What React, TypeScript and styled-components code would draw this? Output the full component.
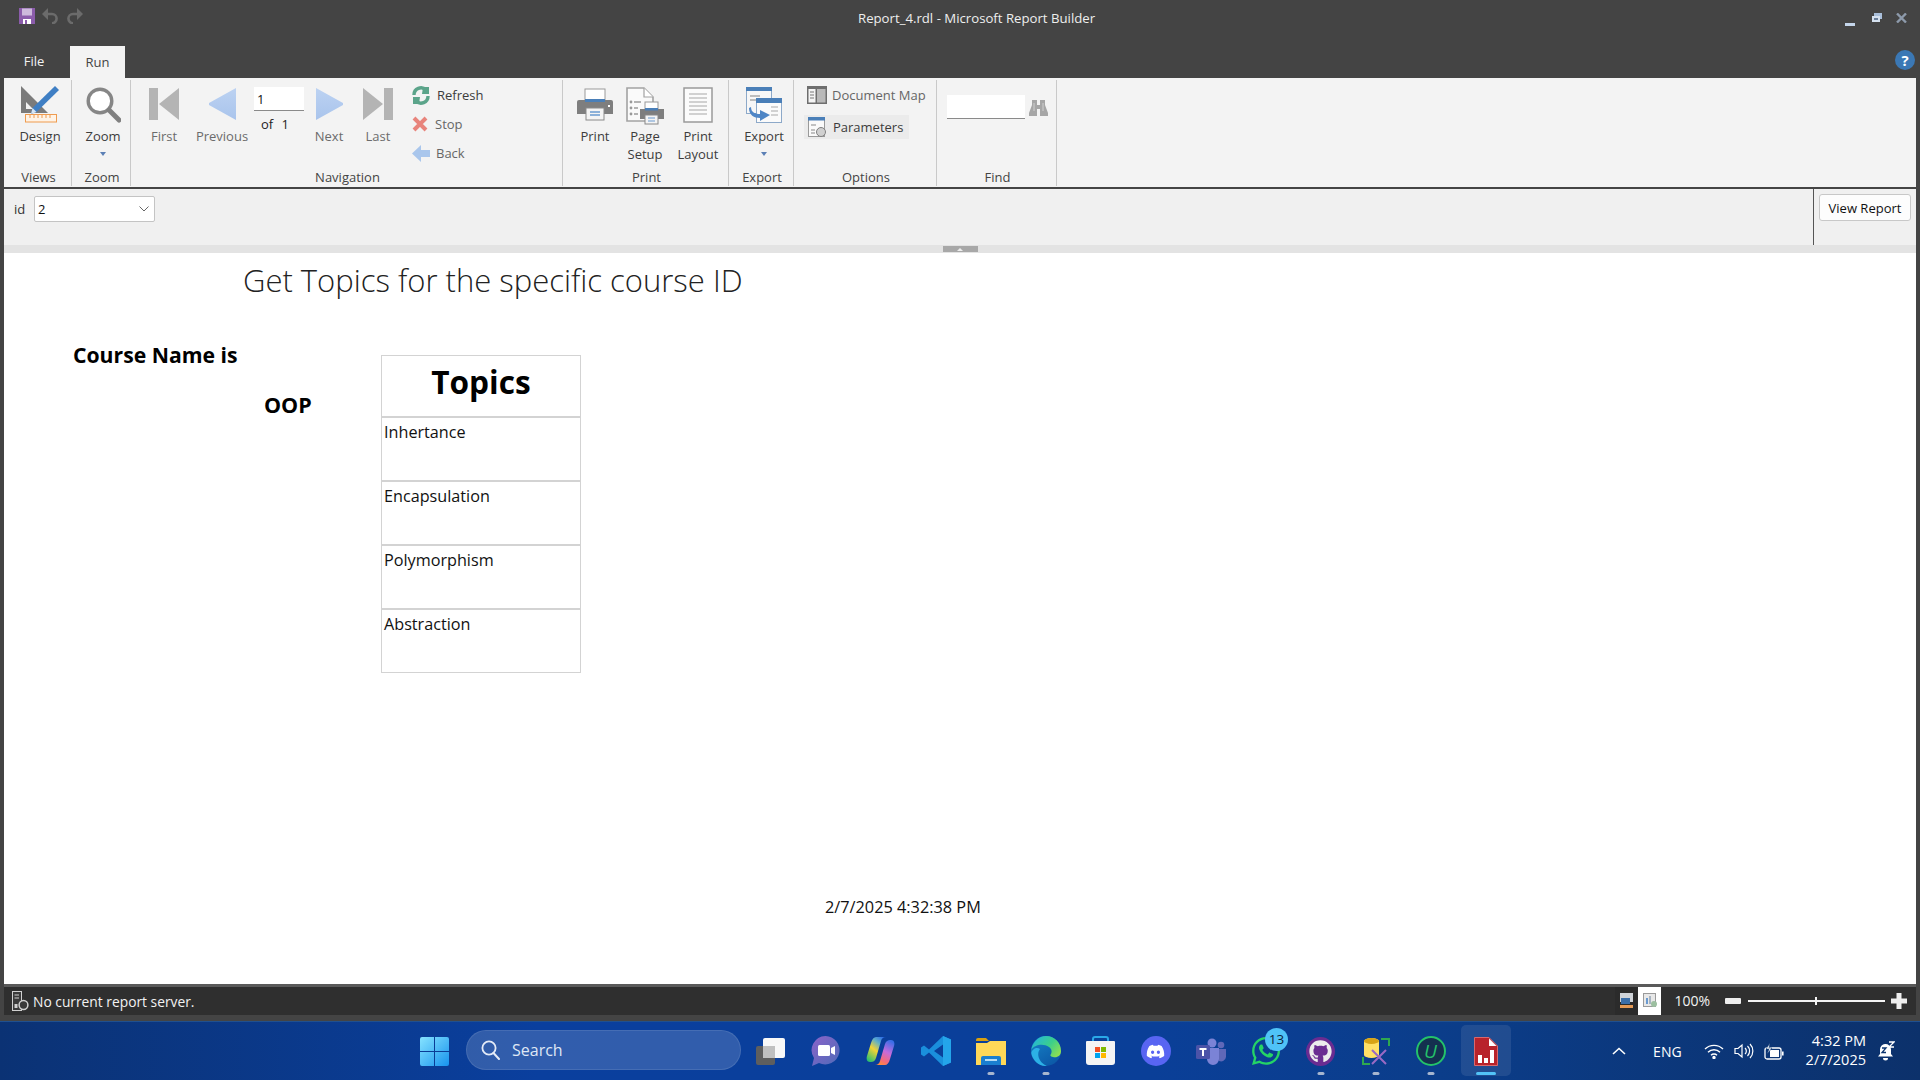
import React from "react";
import styled, { createGlobalStyle } from "styled-components";
import { FaDiscord, FaWhatsapp, FaGithub } from "react-icons/fa";

const Global = createGlobalStyle`
  html, body { margin: 0; padding: 0; background: #444; }
  * { box-sizing: border-box; }
`;
const UI = `"Open Sans", "Noto Sans", "Liberation Sans", sans-serif`;

const Page = styled.div`
  width: 1920px; height: 1080px; display: flex; flex-direction: column; overflow: hidden;
  font-family: ${UI}; font-size: 13px; color: #333;
`;
const Win = styled.div`
  height: 1021px; background: #444; padding: 0 4px; display: flex; flex-direction: column;
`;
const TitleBar = styled.div`
  height: 46px; margin: 0 -4px; padding: 8px 13px 0 19px; display: flex; color: #e6e6e6; position: relative;
`;
const Qat = styled.div`display: flex; gap: 7px; height: 17px; svg { display: block; }`;
const TitleText = styled.div`
  position: absolute; left: 858px; top: 8px; font-size: 13.2px; line-height: 20px; color: #eee; white-space: nowrap;
`;
const WinCtl = styled.div`
  margin-left: auto; display: flex; align-items: flex-start; gap: 14px; padding: 5px 0 0 0; svg { display: block; }
`;
const TabRow = styled.div`height: 32px; display: flex; align-items: stretch; position: relative; margin-left: 0;`;
const Tab = styled.div<{ $active?: boolean; $w: number }>`
  width: ${p => p.$w}px; display: flex; align-items: center; justify-content: center; font-size: 13px;
  background: ${p => (p.$active ? "#f3f3f3" : "transparent")};
  color: ${p => (p.$active ? "#444" : "#f2f2f2")};
  padding: ${p => (p.$active ? "0" : "0 6px 2px 0")};
`;
const Help = styled.div`
  margin-left: auto; margin-top: 4px; margin-right: 1px; width: 20px; height: 20px; border-radius: 50%;
  background: #3b78b5; color: #fff; font: 700 15px/20px ${UI}; text-align: center;
`;
const Ribbon = styled.div`
  height: 109px; background: #f3f3f3; padding-top: 2px; display: flex; border-bottom: 0;
`;
const Group = styled.div<{ $w: number }>`
  width: ${p => p.$w}px; height: 106px; border-right: 1px solid #c9c9c9; display: flex; flex-direction: column;
`;
const GroupBody = styled.div<{ $pad?: number }>`
  height: 88px; padding: 5px 0 0 ${p => p.$pad ?? 0}px; display: flex; align-items: flex-start;
`;
const GroupLabel = styled.div`
  height: 18px; line-height: 18px; text-align: center; font-size: 13px; color: #444; padding-left: 2px;
`;
const LargeBtn = styled.div<{ $w: number; $muted?: boolean }>`
  width: ${p => p.$w}px; flex: none; display: flex; flex-direction: column; align-items: center;
  color: ${p => (p.$muted ? "#6b6b6b" : "#3c3c3c")}; font-size: 13px; line-height: 18px; text-align: center; white-space: nowrap;
`;
const IconBox = styled.div<{ $top?: number }>`
  height: 42px; display: flex; align-items: flex-start; padding-top: ${p => p.$top ?? 2}px; justify-content: center;
  svg { display: block; }
`;
const Drop = styled.div`
  width: 0; height: 0; margin-top: 7px; border-left: 3.5px solid transparent; border-right: 3.5px solid transparent; border-top: 4px solid #5b7fb5;
`;
const Pager = styled.div`width: 50px; flex: none; font-size: 13px; color: #222; padding-top: 2px;`;
const PageInput = styled.div`
  height: 24px; width: 50px; background: #fff; border-bottom: 1px solid #8a8a8a; padding-left: 3px; line-height: 24px; color: #111;
`;
const PageOf = styled.div`padding-left: 7px; line-height: 26px; word-spacing: 5px;`;
const SmallCol = styled.div<{ $gap: number; $ml?: number }>`
  display: flex; flex-direction: column; align-items: flex-start; gap: ${p => p.$gap}px; margin-left: ${p => p.$ml ?? 0}px;
`;
const SmallBtn = styled.div<{ $h?: number; $hi?: boolean; $gap?: number; $muted?: boolean; $ml?: number }>`
  height: ${p => p.$h ?? 20}px; display: flex; align-items: center; gap: ${p => p.$gap ?? 6}px; white-space: nowrap;
  background: ${p => (p.$hi ? "#ebebeb" : "transparent")}; font-size: 13px;
  color: ${p => (p.$muted ? "#666" : "#3c3c3c")};
  padding-right: ${p => (p.$hi ? 6 : 0)}px; padding-left: ${p => (p.$hi ? 4 : 0)}px; margin-left: ${p => p.$ml ?? 0}px;
  svg { display: block; flex: none; }
`;
const FindRow = styled.div`display: flex; gap: 4px; padding-top: 10px; svg { display: block; margin-top: 4px; }`;
const FindInput = styled.div`width: 78px; height: 24px; background: #fff; border-bottom: 1px solid #8a8a8a;`;

const ParamBar = styled.div`
  height: 58px; border-top: 2px solid #444; background: #f0f0f0; display: flex;
`;
const ParamFields = styled.div`flex: 1; display: flex; align-items: flex-start; padding: 7px 0 0 10px; gap: 6px; border-right: 1px solid #555;`;
const ParamName = styled.div`font-size: 13px; line-height: 26px; color: #333; width: 14px;`;
const Combo = styled.div`
  width: 121px; height: 26px; background: #fff; border: 1px solid #c4c4c4; border-radius: 2px; display: flex; align-items: center;
  padding: 0 5px 0 3px; color: #111; font-size: 13px; justify-content: space-between;
  svg { display: block; }
`;
const ViewCell = styled.div`width: 102px; padding: 5px 5px 0 5px;`;
const ViewBtn = styled.div`
  height: 27px; background: #fdfdfd; border: 1px solid #c8c8c8; border-radius: 3px; text-align: center; line-height: 26px; font-size: 13px; color: #111;
`;
const Band = styled.div`height: 8px; background: #e3e3e3; display: flex; justify-content: center;`;
const Grip = styled.div`
  width: 35px; height: 6px; background: #a8a8a8; display: flex; justify-content: center; align-items: center; margin-top: 1px;
  &::after { content: ""; border-left: 3px solid transparent; border-right: 3px solid transparent; border-bottom: 3px solid #eee; }
`;
const Report = styled.div`
  height: 731px; background: #fff; color: #000; display: flex; flex-direction: column; font-family: ${UI};
`;
const ReportTitle = styled.div`
  margin: 5px 0 0 239px; height: 44px; line-height: 44px; font-size: 31px; font-weight: 300; color: #222; white-space: nowrap;
`;
const ReportBody = styled.div`display: flex; margin-top: 39px;`;
const Names = styled.div`width: 377px; flex: none; padding-left: 69px;`;
const CourseLabel = styled.div`font-size: 21.2px; line-height: 28px; font-weight: 700; white-space: nowrap;`;
const CourseValue = styled.div`font-size: 21.5px; line-height: 28px; font-weight: 700; margin: 22px 0 0 191px;`;
const Topics = styled.div`width: 200px; margin-top: 14px; flex: none;`;
const TopicsHead = styled.div`
  height: 62px; border: 1px solid #d3d3d3; font-size: 31.6px; font-weight: 700; line-height: 52px; text-align: center;
`;
const TopicRow = styled.div`
  height: 64px; border: 1px solid #d3d3d3; padding: 3px 2px; font-size: 16.2px; line-height: 22px; color: #111;
`;
const Stamp = styled.div`margin: 223px 0 0 821px; line-height: 22px; font-size: 16.3px; color: #111;`;

const Status = styled.div`
  height: 31px; border-top: 3px solid #5a5a5a; background: #2f2f2f; display: flex; align-items: center; color: #f2f2f2;
  font-size: 13.8px; padding-left: 8px; gap: 4px; svg { display: block; flex: none; }
`;
const ZoomTools = styled.div`margin-left: auto; display: flex; align-items: center; height: 100%; padding-right: 9px;`;
const ViewToggle = styled.div<{ $on?: boolean }>`
  width: 23px; height: 28px; display: flex; align-items: center; justify-content: center;
  background: ${p => (p.$on ? "#fff" : "#2b2b2b")};
`;
const ZoomPct = styled.div`margin: 0 15px 0 13px; font-size: 14px; line-height: 1;`;
const Slider = styled.div`
  width: 137px; height: 2px; margin: 0 6px 0 7px; background: #f4f4f4; position: relative;
  &::after { content: ""; position: absolute; left: 67px; top: -3px; width: 2px; height: 8px; background: #f4f4f4; }
`;
const WinFoot = styled.div`height: 6px;`;

const Taskbar = styled.div`
  height: 59px; background: linear-gradient(90deg, #0b3274 0%, #0a3f9e 28%, #0a3f98 60%, #0b3d8a 75%, #0c316b 100%);
  border-top: 1px solid #20508f; display: flex; position: relative; color: #fff; padding-left: 407px;
`;
const Slot = styled.div<{ $active?: boolean; $dot?: boolean }>`
  width: 55px; flex: none; height: 58px; display: flex; align-items: center; justify-content: center; position: relative;
  svg { display: block; }
  &::before {
    content: ""; display: ${p => (p.$active ? "block" : "none")}; position: absolute; inset: 3px 2.5px 4px;
    background: rgba(255,255,255,.09); border-radius: 5px;
  }
  &::after {
    content: ""; display: ${p => (p.$dot || p.$active ? "block" : "none")}; position: absolute; bottom: 5px; left: 50%;
    transform: translateX(-50%); width: ${p => (p.$active ? 20 : 7)}px; height: 3px; border-radius: 2px;
    background: ${p => (p.$active ? "#52c3f7" : "#a7b6cf")};
  }
  & > * { position: relative; }
`;
const Search = styled.div`
  width: 275px; height: 40px; margin: 8px 2px 0 4px; border-radius: 20px; background: rgba(255,255,255,.16); border: 1px solid rgba(255,255,255,.1);
  display: flex; align-items: center; gap: 12px; padding-left: 14px; font-size: 16px; color: #dfe7f5; flex: none;
  svg { display: block; }
`;
const Badge = styled.div`
  position: absolute; right: 5px; top: 6px; width: 23px; height: 23px; border-radius: 50%; background: #4fc3f7; color: #10243c;
  font-size: 13.5px; line-height: 23px; text-align: center;
`;
const Tray = styled.div`
  margin-left: auto; display: flex; align-items: center; height: 58px; padding-right: 25px; font-size: 14.5px; svg { display: block; }
`;
const Eng = styled.div`margin: 0 22px 0 27px; font-size: 14px;`;
const TrayIcons = styled.div`display: flex; gap: 10px; align-items: center;`;
const Clock = styled.div`margin: 0 11px 3px 22px; text-align: right; line-height: 19px; font-size: 14.5px;`;

const First = ({ flip }: { flip?: boolean }) => (
  <svg width="30" height="32" viewBox="0 0 30 32">
    <g transform={flip ? "matrix(-1 0 0 1 30 0)" : undefined}>
      <rect x="0" y="0" width="9" height="32" fill="#b4b4b4" />
      <path d="M30 0V32L10 16Z" fill="#b4b4b4" />
    </g>
  </svg>
);
const Arrow = ({ flip }: { flip?: boolean }) => (
  <svg width="27" height="32" viewBox="0 0 27 32">
    <defs>
      <linearGradient id="arr" x1="0" y1="0" x2="0" y2="1">
        <stop offset="0" stopColor="#bcd2f2" /><stop offset="1" stopColor="#a9c4ec" />
      </linearGradient>
    </defs>
    <g transform={flip ? "matrix(-1 0 0 1 27 0)" : undefined}>
      <path d="M27 0V32L0 17V15Z" fill="url(#arr)" />
    </g>
  </svg>
);
const DesignIcon = () => (
  <svg width="38" height="37" viewBox="0 0 38 37">
    <path d="M0 0L27 27H0Z M5 16V23H12Z" fill="#7b7b7b" fillRule="evenodd" />
    <path d="M34 0L38 4L15.5 26L10 28L11.5 22Z" fill="#3f7fc4" />
    <path d="M11.5 22L15.5 26L10 28Z" fill="#d7e5f4" />
    <rect x="4.5" y="28.5" width="31" height="7.5" fill="#fff3e6" stroke="#ef9b4f" />
    <path d="M9 29V32M13 29V32M17 29V32M21 29V32M25 29V32M29 29V32" stroke="#ef9b4f" />
  </svg>
);
const ZoomIcon = () => (
  <svg width="35" height="36" viewBox="0 0 35 36">
    <circle cx="14" cy="14" r="11.8" fill="#fff" stroke="#868686" strokeWidth="3.4" />
    <path d="M23 23L33 33" stroke="#808080" strokeWidth="5" strokeLinecap="round" />
  </svg>
);
const Refresh = () => (
  <svg width="18" height="19" viewBox="0 0 18 19">
    <path d="M2 9a7 7 0 0 1 12-5" fill="none" stroke="#5ba48a" strokeWidth="3.4" />
    <path d="M11 1L17 1V8H10Z" fill="#5ba48a" />
    <path d="M16 10a7 7 0 0 1-12 5" fill="none" stroke="#5ba48a" strokeWidth="3.4" />
    <path d="M7 18L1 18V11H8Z" fill="#5ba48a" />
  </svg>
);
const Stop = () => (
  <svg width="16" height="16" viewBox="0 0 16 16">
    <path d="M2 2L14 14M14 2L2 14" stroke="#e8847c" strokeWidth="4" />
  </svg>
);
const Back = () => (
  <svg width="18" height="17" viewBox="0 0 18 17">
    <path d="M0 8.5L9 0V5H18V12H9V17Z" fill="#a9c6ec" />
  </svg>
);
const PrintIcon = () => (
  <svg width="36" height="33" viewBox="0 0 36 33">
    <rect x="8" y="1" width="20" height="14" fill="#fff" stroke="#9a9a9a" />
    <path d="M2 12H34a2 2 0 0 1 2 2V26H0V14a2 2 0 0 1 2-2Z" fill="#7e7e7e" />
    <rect x="8" y="11" width="20" height="3" fill="#4a7fb8" />
    <rect x="9" y="20" width="18" height="12" fill="#f4f4f4" stroke="#8a8a8a" />
    <path d="M13 24H23M13 27H23" stroke="#6a9ad0" strokeWidth="1.4" />
    <rect x="31" y="17" width="2" height="2" fill="#fff" />
  </svg>
);
const PageSetupIcon = () => (
  <svg width="38" height="38" viewBox="0 0 38 38">
    <path d="M1 1H18L27 10V34H1Z" fill="#fafafa" stroke="#a2a2a2" strokeWidth="1.6" />
    <path d="M18 1V10H27" fill="#fff" stroke="#a2a2a2" strokeWidth="1.2" />
    <path d="M8 15H15M8 21H12M8 27H12" stroke="#9a9a9a" strokeWidth="1.4" />
    <circle cx="5" cy="15" r="1.4" fill="#999" /><circle cx="5" cy="21" r="1.4" fill="#999" /><circle cx="5" cy="27" r="1.4" fill="#999" />
    <rect x="19" y="15" width="13" height="9" fill="#fff" stroke="#999" />
    <path d="M14 22H38V32H14Z" fill="#7e7e7e" />
    <rect x="19" y="21" width="13" height="2.5" fill="#4a7fb8" />
    <rect x="19" y="28" width="13" height="9" fill="#f4f4f4" stroke="#888" />
    <path d="M22 31H29M22 34H29" stroke="#6a9ad0" />
  </svg>
);
const LayoutIcon = () => (
  <svg width="30" height="36" viewBox="0 0 30 36">
    <rect x="1" y="1" width="28" height="34" fill="#fbfbfb" stroke="#9a9a9a" strokeWidth="1.5" />
    <path d="M6 7H24M6 11H24M6 15H24M6 19H24M6 23H24M6 27H24" stroke="#a8a8a8" strokeWidth="1.2" />
  </svg>
);
const ExportIcon = () => (
  <svg width="36" height="36" viewBox="0 0 36 36">
    <rect x="0.5" y="0.5" width="25" height="26" fill="#f7f7f7" stroke="#8da9c9" />
    <rect x="0" y="0" width="26" height="4" fill="#4a7fb8" />
    <path d="M4 9H14M4 13H12" stroke="#aaa" strokeWidth="1.4" />
    <rect x="10.5" y="11.5" width="25" height="24" fill="#fbfbfb" stroke="#8da9c9" />
    <rect x="10" y="11" width="26" height="5" fill="#4a7fb8" />
    <path d="M25 20H32M25 24H32M25 28H32" stroke="#aaa" strokeWidth="1.2" />
    <path d="M5 20C5 26 10 27 14 27V23L24 28L14 34V31C8 31 3 28 3 21Z" fill="#4f86c6" />
  </svg>
);
const DocMap = () => (
  <svg width="20" height="18" viewBox="0 0 20 18">
    <rect width="20" height="18" fill="#6e6e6e" />
    <rect x="1.5" y="3" width="7" height="13.5" fill="#f4f4f4" />
    <rect x="10" y="3" width="8.5" height="13.5" fill="#b9b9b9" />
    <path d="M3 6H7M3 9H7M3 12H7" stroke="#777" />
  </svg>
);
const ParamsIcon = () => (
  <svg width="18" height="20" viewBox="0 0 18 20">
    <rect x="0.5" y="0.5" width="16" height="19" fill="#fafafa" stroke="#9a9a9a" />
    <rect x="0" y="0" width="17" height="3.5" fill="#4a7fb8" />
    <path d="M3 8H8M3 13H7M3 16H7" stroke="#888" />
    <circle cx="13" cy="15" r="4.5" fill="#d0d0d0" stroke="#808080" />
  </svg>
);
const Binoculars = () => (
  <svg width="19" height="17" viewBox="0 0 19 17">
    <path d="M3 1H8V6H11V1H16V6L19 14V17H11V10H8V17H0V14L3 6Z" fill="#a6a6a6" />
    <path d="M5 4V12M14 4V12" stroke="#cfcfcf" />
  </svg>
);
const Caret = () => (
  <svg width="10" height="6" viewBox="0 0 10 6"><path d="M0.5 0.5L5 5L9.5 0.5" fill="none" stroke="#666" /></svg>
);
const SaveIcon = () => (
  <svg width="16" height="16" viewBox="0 0 16 16">
    <path d="M0 0H16V16H0Z" fill="#8b5cab" />
    <rect x="3" y="0.5" width="10" height="7" fill="#cdb9dc" />
    <rect x="4" y="11" width="8" height="5" fill="#fff" />
    <rect x="6" y="12" width="2" height="4" fill="#8b5cab" />
  </svg>
);
const Undo = ({ flip }: { flip?: boolean }) => (
  <svg width="17" height="16" viewBox="0 0 17 16">
    <g transform={flip ? "matrix(-1 0 0 1 17 0)" : undefined}>
      <path d="M2 6H10a4.6 4.6 0 0 1 0 9.2" fill="none" stroke="#6b6b6b" strokeWidth="2.6" />
      <path d="M0 6L6 0V12Z" fill="#6b6b6b" />
    </g>
  </svg>
);
const Minimize = () => (
  <svg width="13" height="13" viewBox="0 0 13 13"><rect x="0" y="10" width="10" height="3" fill="#c4d5ea" /></svg>
);
const Restore = () => (
  <svg width="10" height="10" viewBox="0 0 10 10">
    <rect x="2" y="0" width="8" height="6" fill="#a9bfdb" />
    <rect x="0" y="3" width="8" height="6" fill="#d5e1ef" />
    <rect x="2" y="5" width="4" height="2" fill="#6a7f9b" />
  </svg>
);
const CloseX = () => (
  <svg width="11" height="10" viewBox="0 0 11 10"><path d="M1 0.5L10 9.5M10 0.5L1 9.5" stroke="#8d9aab" strokeWidth="2.4" /></svg>
);
const ServerIcon = () => (
  <svg width="17" height="20" viewBox="0 0 17 20">
    <rect x="0.5" y="0.5" width="9" height="19" fill="#3a3a3a" stroke="#d0d0d0" />
    <path d="M2.5 4H7M2.5 7H7" stroke="#d0d0d0" />
    <rect x="2.5" y="13" width="3" height="4" fill="#d0d0d0" />
    <circle cx="11.5" cy="14" r="4.4" fill="#3a3a3a" stroke="#d0d0d0" strokeWidth="1.5" />
  </svg>
);
const LayoutBtn = () => (
  <svg width="13" height="16" viewBox="0 0 13 16">
    <rect width="13" height="9" fill="#cfd3d8" /><rect x="1" y="5" width="9" height="6" fill="#3a6ea8" />
    <rect x="0" y="12" width="13" height="3" fill="#e59a55" />
  </svg>
);
const PrintBtn = () => (
  <svg width="14" height="16" viewBox="0 0 14 16">
    <rect x="0.5" y="0.5" width="12" height="13" fill="#e8e8e8" stroke="#9a9a9a" />
    <rect x="3" y="5" width="2" height="6" fill="#6a9ad0" /><rect x="6" y="3" width="2" height="8" fill="#a8b4c0" />
    <circle cx="11" cy="11" r="3" fill="#9cbfa0" />
  </svg>
);
const WinLogo = () => (
  <svg width="29" height="29" viewBox="0 0 29 29">
    <defs><linearGradient id="wl" x1="0" y1="0" x2="1" y2="1"><stop offset="0" stopColor="#86e3ff" /><stop offset="1" stopColor="#1793ee" /></linearGradient></defs>
    <path d="M0 2a2 2 0 0 1 2-2H14V14H0ZM15 0H27a2 2 0 0 1 2 2V14H15ZM0 15H14V29H2a2 2 0 0 1-2-2ZM15 15H29V27a2 2 0 0 1-2 2H15Z" fill="url(#wl)" />
  </svg>
);
const SearchGlyph = () => (
  <svg width="19" height="20" viewBox="0 0 19 20">
    <circle cx="8" cy="8" r="6.6" fill="none" stroke="#e4ebf7" strokeWidth="1.8" />
    <path d="M12.5 13L18 19" stroke="#e4ebf7" strokeWidth="2" strokeLinecap="round" />
  </svg>
);
const TaskView = () => (
  <svg width="29" height="27" viewBox="0 0 29 27">
    <rect x="0" y="8" width="19" height="19" rx="2" fill="#5e5e5e" />
    <rect x="7" y="0" width="22" height="20" rx="2" fill="#f8f8f8" />
    <rect x="7" y="8" width="12" height="12" fill="#c0c0c0" />
  </svg>
);
const Meet = () => (
  <svg width="29" height="30" viewBox="0 0 29 30">
    <defs><linearGradient id="mt" x1="0" y1="0" x2="1" y2="1"><stop offset="0" stopColor="#8a63c9" /><stop offset="1" stopColor="#4f6bb8" /></linearGradient></defs>
    <path d="M14.5 0a14.2 14.2 0 1 1-6.5 26.9L1 30L3 22A14.2 14.2 0 0 1 14.5 0Z" fill="url(#mt)" />
    <rect x="7" y="9" width="12" height="11" rx="1.5" fill="#fff" />
    <path d="M20 12L24 10V19L20 17Z" fill="#fff" />
  </svg>
);
const Copilot = () => (
  <svg width="29" height="30" viewBox="0 0 29 30">
    <defs>
      <linearGradient id="c1" x1=".2" y1="1" x2=".8" y2="0"><stop offset="0" stopColor="#2fc06e" /><stop offset=".45" stopColor="#f2d335" /><stop offset=".75" stopColor="#5fb0c8" /><stop offset="1" stopColor="#2f6fe6" /></linearGradient>
      <linearGradient id="c2" x1=".7" y1="0" x2=".3" y2="1"><stop offset="0" stopColor="#3a6ee8" /><stop offset=".45" stopColor="#c56bdc" /><stop offset=".8" stopColor="#f56a7a" /><stop offset="1" stopColor="#ff8a3c" /></linearGradient>
    </defs>
    <path d="M10 1H20C17 1 15.5 3 15 5L10 22C9 25 7 26 5 26H4C1 26 0 23 1 20L5 7C6 3 8 1 10 1Z" fill="url(#c1)" />
    <path d="M19 29H9C12 29 13.5 27 14 25L19 8C20 5 22 4 24 4H25C28 4 29 7 28 10L24 23C23 27 21 29 19 29Z" fill="url(#c2)" />
  </svg>
);
const VsCode = () => (
  <svg width="30" height="30" viewBox="0 0 30 30">
    <path d="M22 0L30 3.5V26.5L22 30L8 16.5L3 20.5L0 18.5V11.5L3 9.5L8 13.5Z M22 8.5L13 15L22 21.5Z" fill="#1a8fdc" fillRule="evenodd" />
    <path d="M22 0L30 3.5V26.5L22 30Z" fill="#24a5ea" />
  </svg>
);
const Folder = () => (
  <svg width="30" height="27" viewBox="0 0 30 27">
    <path d="M0 2a2 2 0 0 1 2-2H10L13 3H0Z" fill="#d9a00f" />
    <path d="M0 5H11L14 3H30V27H0Z" fill="#ffd858" />
    <path d="M5 27V20a2 2 0 0 1 2-2H23a2 2 0 0 1 2 2V27Z" fill="#1a7fd0" />
    <rect x="9" y="21" width="12" height="2" fill="#b5dcf5" />
  </svg>
);
const Edge = () => (
  <svg width="30" height="30" viewBox="0 0 30 30">
    <defs>
      <linearGradient id="e1" x1="0" y1=".2" x2="1" y2=".8"><stop offset="0" stopColor="#23b6dc" /><stop offset=".55" stopColor="#3ccf8a" /><stop offset="1" stopColor="#92e04f" /></linearGradient>
      <linearGradient id="e2" x1="0" y1="0" x2=".6" y2="1"><stop offset="0" stopColor="#1684c8" /><stop offset="1" stopColor="#0c5aa8" /></linearGradient>
    </defs>
    <circle cx="15" cy="15" r="15" fill="url(#e2)" />
    <path d="M9 13C5 18 8 27 16 29.8C9 31 1.5 25 0.3 17C1 13 6 10.5 9 13Z" fill="#2cb0e6" />
    <path d="M0.3 14C1.5 6 8 0 15 0C24 0 30 7 30 15C30 20 26 22 22 21C19 20.5 19 19 20 18C21 16 21 13 18 11C12 7 3 9 0.3 14Z" fill="url(#e1)" />
  </svg>
);
const Store = () => (
  <svg width="29" height="30" viewBox="0 0 29 30">
    <path d="M7 6V3a2 2 0 0 1 2-2H20a2 2 0 0 1 2 2V6" fill="none" stroke="#2aa8e8" strokeWidth="2" />
    <path d="M1 5H28a1 1 0 0 1 1 1V26a3 3 0 0 1-3 3H3a3 3 0 0 1-3-3V6a1 1 0 0 1 1-1Z" fill="#f4f4f4" />
    <rect x="9" y="11" width="5" height="5" fill="#f25022" /><rect x="15" y="11" width="5" height="5" fill="#7fba00" />
    <rect x="9" y="17" width="5" height="5" fill="#00a4ef" /><rect x="15" y="17" width="5" height="5" fill="#ffb900" />
  </svg>
);
const DiscordDot = styled.div`
  width: 30px; height: 30px; border-radius: 50%; background: #5865f2; color: #fff; display: flex; align-items: center; justify-content: center;
`;
const Teams = () => (
  <svg width="30" height="27" viewBox="0 0 30 27">
    <circle cx="16" cy="5" r="4.5" fill="#7b83d6" /><circle cx="25" cy="7" r="3.3" fill="#5f68b8" />
    <path d="M19 11H30V19a5 5 0 0 1-7 4Z" fill="#5f68b8" />
    <path d="M9 10H23V21a6 6 0 0 1-12 0Z" fill="#7b83d6" />
    <rect x="0" y="7" width="14" height="14" rx="1.5" fill="#4b53a8" />
    <path d="M3.5 10H10.5V12H8V18H6V12H3.5Z" fill="#fff" />
  </svg>
);
const GitDot = styled.div`
  width: 29px; height: 29px; border-radius: 50%; background: #6a2c91; color: #ececec; display: flex; align-items: center; justify-content: center;
`;
const ToolIcon = () => (
  <svg width="28" height="27" viewBox="0 0 28 27">
    <path d="M19 1H27V8M1 19V26H8" fill="none" stroke="#2fa84f" strokeWidth="2" />
    <path d="M2 3a7.5 3 0 0 1 15 0V17a7.5 3 0 0 1-15 0Z" fill="#ffe066" />
    <path d="M2 3a7.5 3 0 0 0 15 0a7.5 3 0 0 0-15 0Z" fill="#d8a315" />
    <path d="M10 12L24 26M24 12L10 26" stroke="#9a6ac4" strokeWidth="2" />
  </svg>
);
const IoDot = styled.div`
  width: 30px; height: 30px; border-radius: 50%; border: 2.5px solid #24c26a; background: #14304f; color: #24c26a;
  display: flex; align-items: center; justify-content: center; font: italic 400 19px/1 ${UI};
`;
const ReportIcon = () => (
  <svg width="24" height="29" viewBox="0 0 24 29">
    <path d="M0.5 0.5H15L23.5 9V28.5H0.5Z" fill="#b8232b" stroke="#d9686c" />
    <path d="M15 1.5L22.5 9H15Z" fill="#fff" />
    <rect x="4" y="18" width="4" height="8" fill="#fff" /><rect x="10" y="21" width="4" height="5" fill="#fff" /><rect x="16" y="13" width="4" height="13" fill="#fff" />
  </svg>
);
const Chevron = () => (
  <svg width="14" height="8" viewBox="0 0 14 8"><path d="M1 7L7 1.5L13 7" fill="none" stroke="#fff" strokeWidth="1.6" /></svg>
);
const Wifi = () => (
  <svg width="20" height="15" viewBox="0 0 20 15" fill="none" stroke="#fff" strokeWidth="1.4">
    <path d="M1 5a13 13 0 0 1 18 0M4 8.3a8.5 8.5 0 0 1 12 0M7 11.2a4.2 4.2 0 0 1 6 0" /><circle cx="10" cy="13.5" r="1" fill="#fff" />
  </svg>
);
const Speaker = () => (
  <svg width="20" height="16" viewBox="0 0 20 16" fill="none" stroke="#fff" strokeWidth="1.2">
    <path d="M1 5.5H4L8 2V14L4 10.5H1Z" />
    <path d="M11 5a4 4 0 0 1 0 6M13.5 3a7 7 0 0 1 0 10M16 1a10 10 0 0 1 0 14" />
  </svg>
);
const Battery = () => (
  <svg width="20" height="17" viewBox="0 0 20 17">
    <rect x="1" y="5" width="16" height="11" rx="2" fill="none" stroke="#fff" strokeWidth="1.3" />
    <rect x="6" y="7" width="9" height="7" fill="#fff" />
    <rect x="18" y="8.5" width="1.6" height="4" fill="#fff" />
    <path d="M6 0L2 6H5L3 11L8 5H5Z" fill="#fff" stroke="#0c3570" strokeWidth=".6" />
  </svg>
);
const Bell = () => (
  <svg width="18" height="20" viewBox="0 0 18 20">
    <path d="M8 3a5.5 5.5 0 0 1 6 5.5V13l2 2.5H1L3 13V8.5A5.5 5.5 0 0 1 8 3Z" fill="#fff" />
    <path d="M6 17H11a2.5 2.5 0 0 1-5 0Z" fill="#fff" />
    <path d="M5 7H9L5 11.5H9" fill="none" stroke="#0c3570" strokeWidth="1.3" />
    <path d="M12 1H17L12 6H17" fill="none" stroke="#fff" strokeWidth="1.3" />
  </svg>
);

export default function App() {
  return (
    <Page>
      <Global />
      <Win>
        <TitleBar>
          <Qat>
            <SaveIcon />
            <Undo />
            <Undo flip />
          </Qat>
          <TitleText>Report_4.rdl - Microsoft Report Builder</TitleText>
          <WinCtl>
            <Minimize />
            <Restore />
            <CloseX />
          </WinCtl>
        </TitleBar>
        <TabRow>
          <Tab $w={66}>File</Tab>
          <Tab $w={55} $active>Run</Tab>
          <Help>?</Help>
        </TabRow>
        <Ribbon>
          <Group $w={68}>
            <GroupBody $pad={5}>
              <LargeBtn $w={62}><IconBox $top={1}><DesignIcon /></IconBox>Design</LargeBtn>
            </GroupBody>
            <GroupLabel>Views</GroupLabel>
          </Group>
          <Group $w={59}>
            <GroupBody $pad={4}>
              <LargeBtn $w={54}><IconBox><ZoomIcon /></IconBox>Zoom<Drop /></LargeBtn>
            </GroupBody>
            <GroupLabel>Zoom</GroupLabel>
          </Group>
          <Group $w={432}>
            <GroupBody $pad={7}>
              <LargeBtn $w={52} $muted><IconBox $top={3}><First /></IconBox>First</LargeBtn>
              <LargeBtn $w={64} $muted><IconBox $top={3}><Arrow /></IconBox>Previous</LargeBtn>
              <Pager>
                <PageInput>1</PageInput>
                <PageOf>of 1</PageOf>
              </Pager>
              <LargeBtn $w={50} $muted><IconBox $top={3}><Arrow flip /></IconBox>Next</LargeBtn>
              <LargeBtn $w={48} $muted><IconBox $top={3}><First flip /></IconBox>Last</LargeBtn>
              <SmallCol $gap={9} $ml={10}>
                <SmallBtn $gap={7}><Refresh />Refresh</SmallBtn>
                <SmallBtn $gap={7} $muted><Stop />Stop</SmallBtn>
                <SmallBtn $gap={6} $muted><Back />Back</SmallBtn>
              </SmallCol>
            </GroupBody>
            <GroupLabel>Navigation</GroupLabel>
          </Group>
          <Group $w={166}>
            <GroupBody $pad={10}>
              <LargeBtn $w={44}><IconBox $top={3}><PrintIcon /></IconBox>Print</LargeBtn>
              <LargeBtn $w={56}><IconBox><PageSetupIcon /></IconBox>Page<br />Setup</LargeBtn>
              <LargeBtn $w={50}><IconBox><LayoutIcon /></IconBox>Print<br />Layout</LargeBtn>
            </GroupBody>
            <GroupLabel>Print</GroupLabel>
          </Group>
          <Group $w={65}>
            <GroupBody $pad={7}>
              <LargeBtn $w={56}><IconBox><ExportIcon /></IconBox>Export<Drop /></LargeBtn>
            </GroupBody>
            <GroupLabel>Export</GroupLabel>
          </Group>
          <Group $w={143}>
            <GroupBody $pad={10}>
              <SmallCol $gap={10}>
                <SmallBtn $gap={5} $muted $ml={3}><DocMap />Document Map</SmallBtn>
                <SmallBtn $h={24} $hi $gap={7}><ParamsIcon />Parameters</SmallBtn>
              </SmallCol>
            </GroupBody>
            <GroupLabel>Options</GroupLabel>
          </Group>
          <Group $w={120}>
            <GroupBody $pad={10}>
              <FindRow>
                <FindInput />
                <Binoculars />
              </FindRow>
            </GroupBody>
            <GroupLabel>Find</GroupLabel>
          </Group>
        </Ribbon>
        <ParamBar>
          <ParamFields>
            <ParamName>id</ParamName>
            <Combo>2<Caret /></Combo>
          </ParamFields>
          <ViewCell><ViewBtn>View Report</ViewBtn></ViewCell>
        </ParamBar>
        <Band><Grip /></Band>
        <Report>
          <ReportTitle>Get Topics for the specific course ID</ReportTitle>
          <ReportBody>
            <Names>
              <CourseLabel>Course Name is</CourseLabel>
              <CourseValue>OOP</CourseValue>
            </Names>
            <Topics>
              <TopicsHead>Topics</TopicsHead>
              <TopicRow>Inhertance</TopicRow>
              <TopicRow>Encapsulation</TopicRow>
              <TopicRow>Polymorphism</TopicRow>
              <TopicRow>Abstraction</TopicRow>
            </Topics>
          </ReportBody>
          <Stamp>2/7/2025 4:32:38 PM</Stamp>
        </Report>
        <Status>
          <ServerIcon />
          No current report server.
          <ZoomTools>
            <ViewToggle><LayoutBtn /></ViewToggle>
            <ViewToggle $on><PrintBtn /></ViewToggle>
            <ZoomPct>100%</ZoomPct>
            <svg width="16" height="6" viewBox="0 0 16 6"><rect width="16" height="6" rx="1" fill="#eee" /></svg>
            <Slider />
            <svg width="16" height="16" viewBox="0 0 16 16"><path d="M5.5 0H10.5V5.5H16V10.5H10.5V16H5.5V10.5H0V5.5H5.5Z" fill="#eee" /></svg>
          </ZoomTools>
        </Status>
        <WinFoot />
      </Win>
      <Taskbar>
        <Slot><WinLogo /></Slot>
        <Search><SearchGlyph />Search</Search>
        <Slot><TaskView /></Slot>
        <Slot><Meet /></Slot>
        <Slot><Copilot /></Slot>
        <Slot><VsCode /></Slot>
        <Slot $dot><Folder /></Slot>
        <Slot $dot><Edge /></Slot>
        <Slot><Store /></Slot>
        <Slot><DiscordDot><FaDiscord size={19} /></DiscordDot></Slot>
        <Slot><Teams /></Slot>
        <Slot>
          <FaWhatsapp size={32} color="#25d366" />
          <Badge>13</Badge>
        </Slot>
        <Slot $dot><GitDot><FaGithub size={23} /></GitDot></Slot>
        <Slot $dot><ToolIcon /></Slot>
        <Slot $dot><IoDot>U</IoDot></Slot>
        <Slot $active><ReportIcon /></Slot>
        <Tray>
          <Chevron />
          <Eng>ENG</Eng>
          <TrayIcons><Wifi /><Speaker /><Battery /></TrayIcons>
          <Clock>4:32 PM<br />2/7/2025</Clock>
          <Bell />
        </Tray>
      </Taskbar>
    </Page>
  );
}
